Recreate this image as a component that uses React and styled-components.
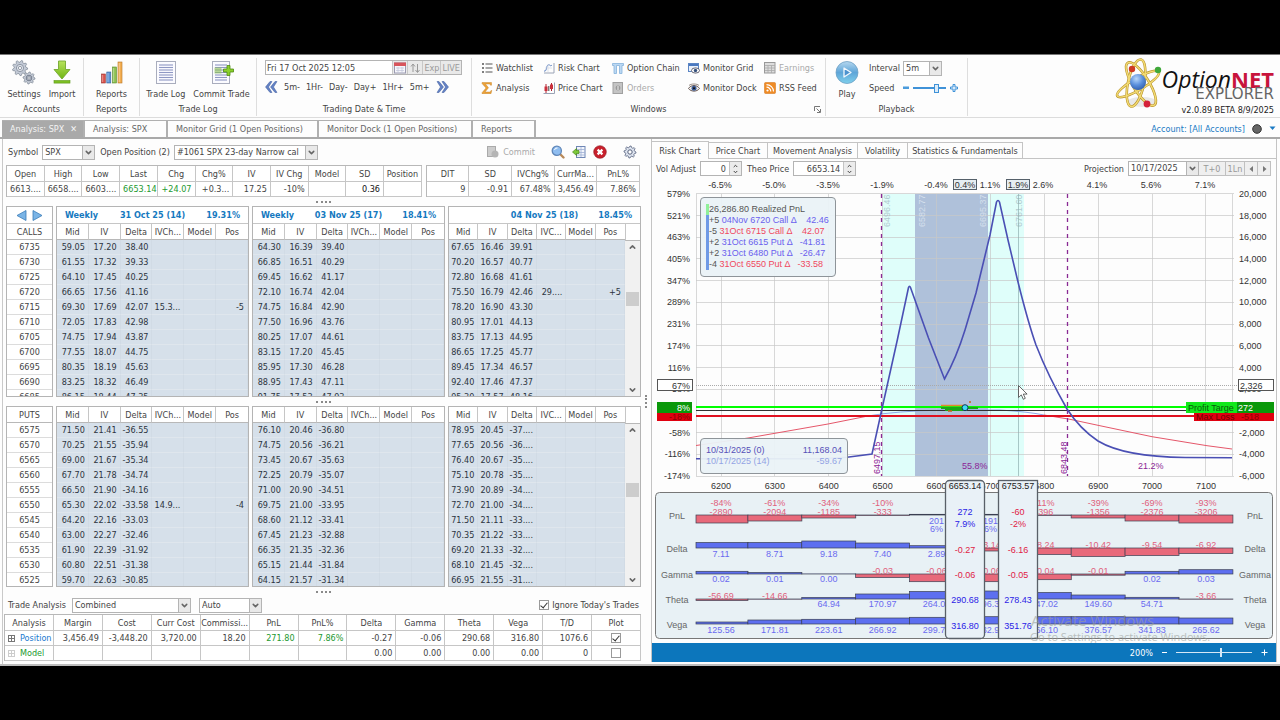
import React, { useState } from "react";
import styled, { createGlobalStyle, css } from "styled-components";
import { ChevronDown, ChevronUp } from "lucide-react";

/* ---------- data ---------- */

const quoteCols = [
  ["Open", "6613...."],
  ["High", "6658...."],
  ["Low", "6603...."],
  ["Last", "6653.14", "green"],
  ["Chg", "+24.07", "green"],
  ["Chg%", "+0.3..."],
  ["IV", "17.25"],
  ["IV Chg", "-10%"],
  ["Model", ""],
  ["SD", "0.36", "strong"],
  ["Position", ""],
];

const tradeCols = [
  ["DIT", "9"],
  ["SD", "-0.91"],
  ["IVChg%", "67.48%"],
  ["CurrMa...", "3,456.49"],
  ["PnL%", "7.86%"],
];

const callStrikes = ["6735", "6730", "6725", "6720", "6715", "6710", "6705", "6700", "6695", "6690", "6685"];
const putStrikes = ["6575", "6570", "6565", "6560", "6555", "6550", "6545", "6540", "6535", "6530", "6525"];

const calls = [
  [
    "59.05 17.20 38.40", "61.55 17.32 39.33", "64.10 17.45 40.25", "66.65 17.56 41.16",
    "69.30 17.69 42.07 15.3... - -5", "72.05 17.83 42.98", "74.75 17.94 43.87", "77.55 18.07 44.75",
    "80.35 18.19 45.63", "83.25 18.32 46.49", "86.15 18.44 47.35",
  ],
  [
    "64.30 16.39 39.40", "66.85 16.51 40.29", "69.45 16.62 41.17", "72.10 16.74 42.04",
    "74.75 16.84 42.90", "77.50 16.96 43.76", "80.25 17.07 44.61", "83.15 17.20 45.45",
    "85.95 17.30 46.28", "88.95 17.43 47.11", "91.75 17.53 47.93",
  ],
  [
    "67.65 16.46 39.91", "70.20 16.57 40.77", "72.80 16.68 41.61", "75.50 16.79 42.46 29.... - +5",
    "78.20 16.90 43.30", "80.95 17.01 44.13", "83.75 17.13 44.95", "86.65 17.25 45.77",
    "89.45 17.34 46.57", "92.40 17.46 47.37", "95.30 17.57 48.16",
  ],
];

const puts = [
  [
    "71.50 21.41 -36.55", "70.25 21.55 -35.94", "69.00 21.67 -35.34", "67.70 21.78 -34.74",
    "66.50 21.90 -34.16", "65.30 22.02 -33.58 14.9... - -4", "64.20 22.16 -33.03", "63.00 22.27 -32.46",
    "61.90 22.39 -31.92", "60.80 22.51 -31.38", "59.70 22.63 -30.85",
  ],
  [
    "76.10 20.46 -36.80", "74.75 20.56 -36.21", "73.45 20.67 -35.63", "72.25 20.79 -35.07",
    "71.00 20.90 -34.51", "69.75 21.00 -33.95", "68.60 21.12 -33.41", "67.45 21.23 -32.88",
    "66.35 21.35 -32.36", "65.15 21.44 -31.84", "64.15 21.57 -31.34",
  ],
  [
    "78.95 20.45 -37....", "77.65 20.56 -36....", "76.40 20.67 -35....", "75.10 20.78 -35....",
    "73.90 20.89 -34....", "72.70 21.00 -34....", "71.50 21.11 -33....", "70.35 21.22 -33....",
    "69.20 21.33 -32....", "68.10 21.45 -32....", "66.95 21.55 -31....",
  ],
];

const expiries = [
  { weekly: "Weekly", date: "31 Oct 25 (14)", iv: "19.31%" },
  { weekly: "Weekly", date: "03 Nov 25 (17)", iv: "18.41%" },
  { weekly: "", date: "04 Nov 25 (18)", iv: "18.45%" },
];

const analysisHead = [
  "Analysis", "Margin", "Cost", "Curr Cost", "Commissi...", "PnL", "PnL%",
  "Delta", "Gamma", "Theta", "Vega", "T/D", "Plot",
];

const legend = [
  ["+5", " 04Nov 6720 Call Δ    42.46", "#6a60ee"],
  ["-5", " 31Oct 6715 Call Δ    42.07", "#f0485e"],
  ["+2", " 31Oct 6615 Put Δ   -41.81", "#6a60ee"],
  ["+2", " 31Oct 6480 Put Δ   -26.47", "#6a60ee"],
  ["-4", " 31Oct 6550 Put Δ   -33.58", "#f0485e"],
];

/* ---------- shared parts ---------- */

const GlobalStyle = createGlobalStyle`
  * {
    box-sizing: border-box;
  }
  body {
    margin: 0;
    background: #000;
  }
  body, button, input, select {
    font-family: "DejaVu Sans Condensed", "DejaVu Sans", Tahoma, sans-serif;
    font-size: 9px;
    line-height: 12px;
    color: #444;
  }
  button {
    padding: 0;
    border: none;
    background: none;
    cursor: pointer;
  }
`;

const Page = styled.div`
  min-height: 100vh;
  padding: 54px 0;
  background: #000;
`;

const AppWindow = styled.div`
  background: #fdfdfd;
  border-top: 1px solid #777;
`;

const Row = styled.div`
  display: flex;
  align-items: center;
  gap: ${(p) => p.$gap || 0}px;
`;

const SelectWrap = styled.span`
  position: relative;
  display: flex;
  flex: 0 1 ${(p) => p.$w}px;
  width: ${(p) => p.$w}px;
  min-width: 0;
  select {
    appearance: none;
    width: 100%;
    height: 15px;
    padding: 0 12px 0 2px;
    border: 1px solid #b4b4b4;
    border-radius: 0;
    background: #fff;
    line-height: 13px;
  }
  svg {
    position: absolute;
    top: 1px;
    right: 1px;
    width: 12px;
    height: 13px;
    padding: 2px 1px;
    border-left: 1px solid #b4b4b4;
    background: #e9e9e9;
    color: #666;
    pointer-events: none;
  }
`;

function Select({ width, value, id, label }) {
  return (
    <SelectWrap $w={width}>
      <select id={id} aria-label={label} defaultValue={value}>
        <option>{value}</option>
      </select>
      <ChevronDown strokeWidth={4} />
    </SelectWrap>
  );
}

const Dots = styled.div`
  height: ${(p) => p.$h || 9}px;
  display: flex;
  align-items: center;
  justify-content: center;
  &::after {
    content: "";
    width: 15px;
    border-top: 2px dotted #8a8a8a;
  }
`;

const Check = styled.input`
  appearance: none;
  width: 10px;
  height: 10px;
  margin: 0;
  border: 1px solid #9a9a9a;
  background: #fff;
  position: relative;
  &:checked::after {
    content: "";
    position: absolute;
    left: 2px;
    top: 0;
    width: 3px;
    height: 6px;
    border: solid #333;
    border-width: 0 1px 1px 0;
    transform: rotate(40deg);
  }
`;

/* ---------- ribbon ---------- */

const RibbonBar = styled.header`
  display: flex;
  height: 63px;
  padding: 3px 6px 1px 0;
  border-bottom: 1px solid #dcdcdc;
`;

const Group = styled.section`
  flex: 0 1 ${(p) => p.$w}px;
  min-width: 0;
  display: flex;
  flex-direction: column;
  border-right: 1px solid #dedede;
`;

const GroupBody = styled.div`
  flex: 1;
  display: flex;
  justify-content: center;
  gap: ${(p) => p.$gap || 0}px;
  padding-top: 2px;
`;

const GroupLabel = styled.div`
  display: flex;
  justify-content: center;
  height: 13px;
  position: relative;
  svg {
    position: absolute;
    right: 4px;
    top: 3px;
  }
`;

const BigButton = styled.button`
  display: flex;
  flex-direction: column;
  align-items: center;
  justify-content: space-between;
  height: 40px;
  white-space: nowrap;
`;

const DateColumn = styled.div`
  flex: 1;
  padding: 0 9px 0 8px;
`;

const DateBox = styled.div`
  display: flex;
  height: 15px;
  border: 1px solid #b4b4b4;
  background: #e9e9e9;
  input {
    flex: 1;
    min-width: 0;
    border: none;
    padding: 0 1px;
  }
  button {
    border-left: 1px solid #c8c8c8;
    color: #999;
    padding: 0 1px;
    display: flex;
    align-items: center;
  }
`;

const StepRow = styled.div`
  display: flex;
  align-items: center;
  gap: 6px;
  margin-top: 6px;
  button {
    white-space: nowrap;
  }
  svg {
    display: block;
  }
`;

const WindowGrid = styled.div`
  flex: 1;
  display: grid;
  grid-template-columns: 62px 69px 76px 76px 1fr;
  grid-auto-rows: 20px;
  padding-left: 9px;
  margin-top: -2px;
  button {
    display: flex;
    align-items: center;
    gap: 3px;
    white-space: nowrap;
  }
  button:disabled {
    color: #aaa;
  }
`;

const PlayControls = styled.div`
  display: grid;
  grid-template-columns: 34px auto;
  grid-auto-rows: 20px;
  align-items: center;
  margin-top: -2px;
`;

const Slider = styled.input`
  appearance: none;
  width: ${(p) => p.$w}px;
  height: 12px;
  margin: 0;
  background: linear-gradient(${(p) => p.$color}, ${(p) => p.$color}) center / 100% ${(p) => p.$track}px no-repeat;
  &::-webkit-slider-thumb {
    appearance: none;
    width: ${(p) => p.$thumb}px;
    height: 9px;
    border: 1px solid ${(p) => p.$color};
    background: ${(p) => p.$fill};
  }
`;

const Brand = styled.div`
  margin-left: auto;
  display: flex;
  align-items: flex-start;
`;

const BrandText = styled.div`
  display: flex;
  flex-direction: column;
  align-items: flex-end;
  margin-left: -2px;
  padding-top: 8px;
`;

const BrandName = styled.div`
  font-family: "Open Sans", "Noto Sans", sans-serif;
  font-size: 23px;
  line-height: 26px;
  color: #111;
  white-space: nowrap;
  em {
    font-style: italic;
  }
  b {
    font-size: 22px;
    color: #c8143c;
  }
`;

const BrandSub = styled.div`
  font-family: "DejaVu Sans", sans-serif;
  font-size: 15px;
  line-height: 12px;
  margin-top: -4px;
  color: #666;
`;

const Version = styled.div`
  margin-top: 4px;
  color: #222;
`;

const ic = { width: 12, height: 12, viewBox: "0 0 12 12" };

const gearPath = (cx, cy, r, n) => {
  const pts = [];
  for (let i = 0; i < n * 4; i++) {
    const a = (i / (n * 4)) * Math.PI * 2;
    const rr = i % 4 < 2 ? r : r * 0.76;
    pts.push(`${(cx + rr * Math.cos(a)).toFixed(2)} ${(cy + rr * Math.sin(a)).toFixed(2)}`);
  }
  return "M" + pts.join("L") + "Z";
};

function SettingsIcon() {
  return (
    <svg width="26" height="25" viewBox="0 0 26 25">
      <g fill="#c3cad6" stroke="#7d8694" strokeWidth="0.7">
        <path d={gearPath(9, 8, 7.6, 9)} />
        <path d={gearPath(18, 18, 6, 8)} />
      </g>
      <circle cx="9" cy="8" r="3.6" fill="#dfe4ec" stroke="#7d8694" strokeWidth="0.8" />
      <circle cx="9" cy="8" r="1.6" fill="#fff" stroke="#7d8694" strokeWidth="0.8" />
      <circle cx="18" cy="18" r="2.8" fill="#b4bcc9" stroke="#666f7d" strokeWidth="0.8" />
      <circle cx="18" cy="18" r="1.2" fill="#fff" stroke="#666f7d" strokeWidth="0.6" />
    </svg>
  );
}

function ImportIcon() {
  return (
    <svg width="20" height="25" viewBox="0 0 20 25">
      <defs>
        <linearGradient id="imp" x1="0" y1="0" x2="0" y2="1">
          <stop offset="0" stopColor="#b7e35c" />
          <stop offset="1" stopColor="#6fb512" />
        </linearGradient>
      </defs>
      <path d="M6.500 1h7v8.500h4.500L10 19 2 9.500h4.500z" fill="url(#imp)" stroke="#74a832" strokeWidth="0.9" />
      <rect x="2" y="20.500" width="16" height="2.600" fill="#7cbf22" stroke="#5f9a1c" strokeWidth="0.6" />
    </svg>
  );
}

function ReportsIcon() {
  return (
    <svg width="24" height="25" viewBox="0 0 24 25">
      <rect x="1.500" y="14" width="3.800" height="9" fill="#d9504a" stroke="#96332f" strokeWidth="0.6" />
      <rect x="6.800" y="12" width="4" height="11" fill="#5c93d6" stroke="#37639c" strokeWidth="0.6" />
      <rect x="12.500" y="7" width="4" height="16" fill="#8cc152" stroke="#5a8a2c" strokeWidth="0.6" />
      <rect x="18" y="2" width="4" height="21" fill="#f3ae52" stroke="#b87626" strokeWidth="0.6" />
      <path d="M19.200 3v19M13.700 8v14M8 13v9M2.700 15v7" stroke="#fff" strokeOpacity="0.5" strokeWidth="0.8" />
    </svg>
  );
}

function TradeLogIcon({ commit }) {
  return (
    <svg width="24" height="25" viewBox="0 0 24 25">
      <rect x="2.500" y="1.500" width={commit ? 17 : 19} height="22" fill="#fbfbff" stroke="#a9adbd" />
      {[5, 7.500, 10, 12.500, 15, 17.500, 20].map((y) => (
        <path key={y} d={commit ? `M5 ${y}h12` : `M5 ${y}h14`} stroke="#8f98c4" strokeWidth="1.100" />
      ))}
      {commit && (
        <>
          <rect x="4.500" y="7.500" width="7" height="6" fill="#8cc152" opacity="0.6" />
          <path d="M17 5.500h3v3.500h3.500v3H20v3.500h-3V12h-3.500V9H17z" fill="#8ad02c" stroke="#4f8a12" strokeWidth="0.8" />
        </>
      )}
    </svg>
  );
}

function PlayIcon() {
  return (
    <svg width="24" height="25" viewBox="0 0 24 25">
      <defs>
        <linearGradient id="play" x1="0" y1="0" x2="0" y2="1">
          <stop offset="0" stopColor="#b5d7ef" />
          <stop offset="0.500" stopColor="#5ea5d8" />
          <stop offset="1" stopColor="#7fd0ec" />
        </linearGradient>
      </defs>
      <circle cx="12" cy="12.500" r="11" fill="url(#play)" stroke="#6d9fc4" strokeWidth="0.8" />
      <path d="M9 8v9l7-4.500z" fill="#4b92cf" stroke="#f2f8fd" strokeWidth="1.300" strokeLinejoin="round" />
    </svg>
  );
}

function DoubleChevron({ flip }) {
  return (
    <svg width="13" height="12" viewBox="0 0 13 12">
      <path
        d={flip ? "M1 0.500h2L7.500 6 3 11.500H1L4.500 6zM6 0.500h2L12.500 6 8 11.500H6L9.500 6z" : "M12 0.500h-2L5.500 6l4.500 5.500h2L8.500 6zM7 0.500H5L0.500 6 5 11.500h2L3.500 6z"}
        fill="#6482c4"
        stroke="#3d5a9e"
        strokeWidth="0.5"
      />
    </svg>
  );
}

function AtomLogo() {
  return (
    <svg width="50" height="52" viewBox="0 0 50 52">
      <defs>
        <radialGradient id="core" cx="0.400" cy="0.300" r="0.800">
          <stop offset="0" stopColor="#b9d8fa" />
          <stop offset="0.500" stopColor="#5a8fdc" />
          <stop offset="1" stopColor="#2a55a4" />
        </radialGradient>
      </defs>
      <ellipse cx="28" cy="44" rx="15" ry="5" fill="#e8e8e8" />
      <g fill="none" stroke="#b8932c" strokeWidth="2.600">
        <ellipse cx="27" cy="26" rx="8" ry="25" transform="rotate(-32 27 26)" />
        <ellipse cx="22" cy="25" rx="8" ry="24" transform="rotate(12 22 25)" />
        <ellipse cx="24" cy="26" rx="24" ry="6" transform="rotate(-30 24 26)" />
      </g>
      <g fill="none" stroke="#f3dc74" strokeWidth="1.400">
        <ellipse cx="27" cy="26" rx="8" ry="25" transform="rotate(-32 27 26)" />
        <ellipse cx="22" cy="25" rx="8" ry="24" transform="rotate(12 22 25)" />
        <ellipse cx="24" cy="26" rx="24" ry="6" transform="rotate(-30 24 26)" />
      </g>
      <circle cx="24" cy="24" r="8" fill="url(#core)" />
      <circle cx="18" cy="11" r="3.200" fill="#cf3a22" />
      <circle cx="44" cy="12" r="3.200" fill="#3fa83a" />
      <circle cx="33" cy="46" r="3.400" fill="#d4213a" />
    </svg>
  );
}

const windowIcons = {
  watch: (
    <svg {...ic}>
      <path d="M4.500 2h7M4.500 6h7M4.500 10h7" stroke="#555" strokeWidth="1.200" />
      <path d="M1 2h2M1 6h2M1 10h2" stroke="#555" strokeWidth="1.600" />
    </svg>
  ),
  risk: (
    <svg {...ic}>
      <path d="M11 1v10H1" stroke="#9aa3b5" fill="none" />
      <path d="M1 9c3 1 2-5 4-6s2 2 4 0" stroke="#5a7fc0" fill="none" />
      <path d="M2 6h7M5 2v8" stroke="#ccd3e0" strokeWidth="0.600" />
    </svg>
  ),
  chain: (
    <svg {...ic}>
      <path d="M0.500 1.500h11v2H10v8H7.500v-8h-3v8H2v-8H0.500z" fill="#bcd8f2" stroke="#85b2dc" strokeWidth="0.800" />
    </svg>
  ),
  mgrid: (
    <svg {...ic}>
      <rect x="0.500" y="1.500" width="10" height="8" fill="#e9f0fa" stroke="#5b85c4" />
      <path d="M1 3h9" stroke="#4a78bf" strokeWidth="2" />
      <ellipse cx="7.500" cy="8.500" rx="4" ry="2.600" fill="#fff" stroke="#445" strokeWidth="0.800" />
      <circle cx="7.500" cy="8.500" r="1.700" fill="#35507c" />
    </svg>
  ),
  earn: (
    <svg {...ic}>
      <rect x="0.500" y="0.500" width="10.500" height="10.500" fill="#ddd" stroke="#999" />
      <path d="M1 3.500h10M1 6h10M1 8.500h10M4 3.500v7.500M7.500 3.500v7.500" stroke="#aaa" strokeWidth="0.800" />
    </svg>
  ),
  sigma: (
    <svg {...ic}>
      <path d="M1 0.500h9.500v2.700h-1L9 2H4.500l3 3.800L4 10h5.200l0.800-1.500h0.800L10 11.700H1v-1l4-4.700L1 1.500z" fill="#eba23a" stroke="#c07a18" strokeWidth="0.400" />
    </svg>
  ),
  price: (
    <svg {...ic}>
      <path d="M11.500 0.500v11H0.500" stroke="#9aa3b5" fill="none" />
      <path d="M3 2v9M8.500 1v8" stroke="#b0202e" strokeWidth="1" />
      <rect x="1.500" y="4.500" width="3" height="4.500" fill="#c9303c" />
      <rect x="7" y="2.500" width="3" height="4.500" fill="#c9303c" />
      <path d="M5.800 4v5" stroke="#444" />
    </svg>
  ),
  orders: (
    <svg {...ic}>
      <rect x="1" y="0.500" width="9.500" height="11" fill="#c4c4c4" stroke="#a0a0a0" />
      <circle cx="6" cy="6" r="2.400" fill="#999" />
      <path d="M6 4v4" stroke="#eee" />
    </svg>
  ),
  mdock: (
    <svg {...ic}>
      <path d="M0.500 6.500C3 2.500 9 2.500 11.500 6.500 9 10 3 10 0.500 6.500z" fill="#eee" stroke="#5b4a44" strokeWidth="0.900" />
      <circle cx="6" cy="6.200" r="2.500" fill="#3a5a94" />
      <circle cx="6" cy="6.200" r="1" fill="#111" />
      <path d="M1 3.500C3 1.500 9 1.500 11 3.500" stroke="#6b5a50" fill="none" strokeWidth="0.700" />
    </svg>
  ),
  rss: (
    <svg {...ic}>
      <rect x="0.500" y="0.500" width="11" height="11" rx="1" fill="#ef8b25" stroke="#d06f10" strokeWidth="0.500" />
      <circle cx="3.500" cy="8.500" r="1.100" fill="#fff" />
      <path d="M2.500 5.200a4.300 4.300 0 0 1 4.300 4.300M2.500 2.600a7 7 0 0 1 7 7" fill="none" stroke="#fff" strokeWidth="1.200" />
    </svg>
  ),
};

const windowButtons = [
  ["watch", "Watchlist"],
  ["risk", "Risk Chart"],
  ["chain", "Option Chain"],
  ["mgrid", "Monitor Grid"],
  ["earn", "Earnings", true],
  ["sigma", "Analysis"],
  ["price", "Price Chart"],
  ["orders", "Orders", true],
  ["mdock", "Monitor Dock"],
  ["rss", "RSS Feed"],
];

function Ribbon() {
  return (
    <RibbonBar>
      <Group $w={84}>
        <GroupBody $gap={8}>
          <BigButton><SettingsIcon />Settings</BigButton>
          <BigButton><ImportIcon />Import</BigButton>
        </GroupBody>
        <GroupLabel>Accounts</GroupLabel>
      </Group>
      <Group $w={56}>
        <GroupBody>
          <BigButton><ReportsIcon />Reports</BigButton>
        </GroupBody>
        <GroupLabel>Reports</GroupLabel>
      </Group>
      <Group $w={117}>
        <GroupBody $gap={8}>
          <BigButton><TradeLogIcon />Trade Log</BigButton>
          <BigButton><TradeLogIcon commit />Commit Trade</BigButton>
        </GroupBody>
        <GroupLabel>Trade Log</GroupLabel>
      </Group>
      <Group $w={215}>
        <GroupBody>
          <DateColumn>
            <DateBox>
              <input aria-label="Trading date" defaultValue="Fri 17 Oct 2025 12:05" />
              <button aria-label="Calendar">
                <svg {...ic}>
                  <rect x="0.500" y="1" width="11" height="10" fill="#f6f6fb" stroke="#9a9ab0" />
                  <rect x="0" y="0.500" width="12" height="3.500" fill="#d8555c" />
                  <path d="M2 6h8M2 8.500h8M4 5v6M8 5v6" stroke="#c0c4d8" strokeWidth="0.700" />
                </svg>
              </button>
              <button aria-label="Sync">
                <svg {...ic}>
                  <path d="M4 10V2.500M2 4.500l2-2.500 2 2.500M8.500 2v8M6.500 8l2 2.500L10.500 8" stroke="#999" fill="none" />
                </svg>
              </button>
              <button>Exp</button>
              <button>LIVE</button>
            </DateBox>
            <StepRow>
              <button aria-label="Back"><DoubleChevron /></button>
              {["5m-", "1Hr-", "Day-", "Day+", "1Hr+", "5m+"].map((s) => (
                <button key={s}>{s}</button>
              ))}
              <button aria-label="Forward"><DoubleChevron flip /></button>
            </StepRow>
          </DateColumn>
        </GroupBody>
        <GroupLabel>Trading Date &amp; Time</GroupLabel>
      </Group>
      <Group $w={354}>
        <GroupBody>
          <WindowGrid>
            {windowButtons.map(([icon, label, off]) => (
              <button key={label} disabled={off}>
                {windowIcons[icon]}
                {label}
              </button>
            ))}
          </WindowGrid>
        </GroupBody>
        <GroupLabel>
          Windows
          <svg width="7" height="7" viewBox="0 0 7 7">
            <path d="M0.500 5V0.500H6M2.500 2.500l3.500 3.500M6.500 3v3.500H3" fill="none" stroke="#777" />
          </svg>
        </GroupLabel>
      </Group>
      <Group $w={142}>
        <GroupBody $gap={10}>
          <BigButton><PlayIcon />Play</BigButton>
          <PlayControls>
            <label htmlFor="interval">Interval</label>
            <Select id="interval" width={39} value="5m" />
            <label htmlFor="speed">Speed</label>
            <Row $gap={4}>
              <svg width="6" height="4" viewBox="0 0 6 4"><rect y="0.500" width="6" height="2.500" fill="#4b9bdc" /></svg>
              <Slider id="speed" type="range" defaultValue="75" $w={33} $track={2} $thumb={5} $color="#3f92d8" $fill="#dcecf9" />
              <svg width="8" height="8" viewBox="0 0 8 8">
                <path d="M3 0.500h2V3h2.500v2H5v2.500H3V5H0.500V3H3z" fill="#d8eafa" stroke="#3f92d8" />
              </svg>
            </Row>
          </PlayControls>
        </GroupBody>
        <GroupLabel>Playback</GroupLabel>
      </Group>
      <Brand>
        <AtomLogo />
        <BrandText>
          <BrandName><em>Option</em><b>NET</b></BrandName>
          <BrandSub>EXPLORER</BrandSub>
          <Version>v2.0.89 BETA 8/9/2025</Version>
        </BrandText>
      </Brand>
    </RibbonBar>
  );
}

/* ---------- document tabs ---------- */

const TabStrip = styled.nav`
  display: flex;
  align-items: flex-end;
  height: 21px;
  padding-left: 2px;
  border-bottom: 2px solid #a9a9a9;
`;

const DocTab = styled.button`
  flex: 0 1 ${(p) => p.$w}px;
  height: 17px;
  padding: 0 6px 0 8px;
  display: flex;
  align-items: center;
  justify-content: space-between;
  border-top: 1px solid #b0b0b0;
  border-right: 2px solid #b0b0b0;
  color: #666;
  white-space: nowrap;
  ${(p) =>
    p.$active &&
    css`
      background: #a9a9a9;
      color: #f4f4f4;
    `}
`;

const Account = styled.div`
  margin-left: auto;
  display: flex;
  align-items: center;
  gap: 7px;
  height: 17px;
  padding-right: 4px;
  a {
    color: #1b7ac4;
    text-decoration: none;
  }
`;

function DocTabs() {
  return (
    <TabStrip>
      <DocTab $w={83} $active>Analysis: SPX <span>✕</span></DocTab>
      <DocTab $w={83}>Analysis: SPX</DocTab>
      <DocTab $w={151}>Monitor Grid (1 Open Positions)</DocTab>
      <DocTab $w={154}>Monitor Dock (1 Open Positions)</DocTab>
      <DocTab $w={63}>Reports</DocTab>
      <Account>
        <a href="#accounts">Account: [All Accounts]</a>
        <svg width="10" height="10" viewBox="0 0 10 10"><circle cx="5" cy="5" r="4.300" fill="#666" stroke="#333" /></svg>
        <svg width="7" height="5" viewBox="0 0 7 5"><path d="M0.500 0.500h6L3.500 4z" fill="#1b7ac4" /></svg>
      </Account>
    </TabStrip>
  );
}

/* ---------- left side ---------- */

const Workspace = styled.main`
  display: grid;
  grid-template-columns: 650fr 630fr;
  border-bottom: 2px solid #bdbdbd;
`;

const Left = styled.div`
  display: flex;
  min-width: 0;
  margin-left: 2px;
  border-left: 1px solid #c9c9c9;
`;

const LeftContent = styled.div`
  flex: 1;
  min-width: 0;
  padding-left: 3px;
`;

const Splitter = styled.div`
  width: 9px;
  display: flex;
  align-items: center;
  justify-content: center;
  &::after {
    content: "";
    height: 13px;
    border-left: 2px dotted #8a8a8a;
  }
`;

const SymbolRow = styled.div`
  display: flex;
  align-items: center;
  height: 26px;
  padding: 0 4px 0 2px;
  label {
    margin-right: 4px;
  }
  label + span {
    margin-right: 5px;
  }
`;

const Tools = styled.div`
  margin-left: auto;
  display: flex;
  align-items: center;
  gap: 7px;
  button {
    display: flex;
    align-items: center;
    gap: 4px;
  }
  button:disabled {
    color: #aaa;
    margin-right: 9px;
  }
  button:last-child {
    margin-left: 9px;
  }
`;

const Grid = styled.table`
  width: ${(p) => (p.$w ? p.$w + "%" : "100%")};
  table-layout: fixed;
  border-collapse: separate;
  border-spacing: 0;
  border-left: 1px solid #b8b8b8;
  border-top: 1px solid #b8b8b8;
  background: #fff;
  th, td {
    height: 15px;
    padding: 0 3px;
    border-right: 1px solid #c6c6c6;
    border-bottom: 1px solid #c6c6c6;
    font-weight: normal;
    line-height: 12px;
    white-space: nowrap;
  }
  th {
    padding: 0;
    height: 16px;
    text-align: center;
  }
  td {
    text-align: right;
  }
`;

const tones = { green: "#23992f", strong: "#111", blue: "#1b7ad0" };

const Cell = styled.td`
  color: ${(p) => tones[p.$tone] || "#444"};
`;

const QuoteRow = styled.div`
  display: flex;
  gap: 4px;
  padding-right: 1px;
`;

function QuoteTable({ cols, width }) {
  return (
    <Grid $w={width}>
      <thead>
        <tr>{cols.map(([h]) => <th key={h}>{h}</th>)}</tr>
      </thead>
      <tbody>
        <tr>{cols.map(([h, v, tone]) => <Cell key={h} $tone={tone}>{v}</Cell>)}</tr>
      </tbody>
    </Grid>
  );
}

const Chains = styled.section`
  display: grid;
  grid-template-columns: 47fr 193fr 193fr 193fr;
  gap: 3px;
  height: ${(p) => p.$h}px;
`;

const Panel = styled.div`
  min-width: 0;
  overflow: hidden;
  border: 1px solid #b4b4b4;
  background: #fff;
`;

const ExpiryTitle = styled.div`
  display: grid;
  grid-template-columns: 1fr 2fr 1fr;
  align-items: center;
  height: 17px;
  padding: 0 8px;
  border-bottom: 1px solid #c6c6c6;
  font-weight: bold;
  color: #1579bf;
  white-space: nowrap;
  span:nth-child(2) {
    text-align: center;
  }
  span:nth-child(3) {
    text-align: right;
  }
`;

const NavArrows = styled.div`
  display: flex;
  align-items: center;
  justify-content: center;
  gap: 5px;
  height: 17px;
  border-bottom: 1px solid #c6c6c6;
  svg {
    display: block;
  }
`;

const ChainBody = styled.div`
  display: flex;
`;

const ChainTable = styled.table`
  flex: 1;
  width: 100%;
  min-width: 0;
  table-layout: fixed;
  border-collapse: separate;
  border-spacing: 0;
  th, td {
    padding: 0;
    font-weight: normal;
    line-height: 12px;
    white-space: nowrap;
  }
  th {
    height: 16px;
    border-right: 1px solid #c6c6c6;
    border-bottom: 1px solid #b8b8b8;
  }
  th:last-child {
    border-right: none;
  }
  td {
    height: 15px;
    padding-right: 3px;
    text-align: right;
    color: #2c3440;
    background: #d6e0ea;
    border-right: 1px solid #d1dbe5;
    border-bottom: 1px solid #dfe6ed;
  }
  ${(p) =>
    p.$strikes &&
    css`
      td {
        padding: 0;
        text-align: center;
        color: #444;
        background: #fff;
        border-right: none;
        border-bottom: 1px solid #dcdcdc;
      }
    `}
`;

const Scroll = styled.div`
  flex: 0 0 14px;
  display: flex;
  flex-direction: column;
  align-items: center;
  height: ${(p) => p.$h}px;
  background: #f1f1f1;
  color: #666;
  &::before {
    content: "";
    width: 14px;
    height: 16px;
    border-left: 1px solid #c6c6c6;
    border-bottom: 1px solid #b8b8b8;
    background: #fff;
  }
  svg {
    width: 9px;
    height: 12px;
  }
`;

const ScrollThumb = styled.div`
  width: 13px;
  height: 14px;
  margin: ${(p) => p.$top}px 0 auto;
  background: #cdcdcd;
`;

function Chain({ rows, expiry, scroll, height }) {
  return (
    <Panel>
      {expiry && (
        <ExpiryTitle>
          <span>{expiry.weekly}</span>
          <span>{expiry.date}</span>
          <span>{expiry.iv}</span>
        </ExpiryTitle>
      )}
      <ChainBody>
        <ChainTable>
          <thead>
            <tr>
              {["Mid", "IV", "Delta", scroll ? "IVC..." : "IVCh...", "Model", "Pos"].map((h) => (
                <th key={h}>{h}</th>
              ))}
            </tr>
          </thead>
          <tbody>
            {rows.map((r) => {
              const c = r.split(" ");
              return (
                <tr key={r}>
                  {[0, 1, 2, 3, 4, 5].map((i) => (
                    <td key={i}>{i === 4 ? "" : c[i]}</td>
                  ))}
                </tr>
              );
            })}
          </tbody>
        </ChainTable>
        {scroll ? (
          <Scroll $h={height}>
            <ChevronUp strokeWidth={4} />
            <ScrollThumb $top={scroll} />
            <ChevronDown strokeWidth={4} />
          </Scroll>
        ) : null}
      </ChainBody>
    </Panel>
  );
}

function Strikes({ title, rows, arrows }) {
  return (
    <Panel>
      {arrows && (
        <NavArrows>
          <button aria-label="Previous expiries">
            <svg width="11" height="11" viewBox="0 0 11 11"><path d="M10 0.500v10L1 5.500z" fill="#7ab4e6" stroke="#3a7cb8" strokeWidth="0.800" /></svg>
          </button>
          <button aria-label="Next expiries">
            <svg width="11" height="11" viewBox="0 0 11 11"><path d="M1 0.500v10l9-5z" fill="#7ab4e6" stroke="#3a7cb8" strokeWidth="0.800" /></svg>
          </button>
        </NavArrows>
      )}
      <ChainTable $strikes>
        <thead>
          <tr><th>{title}</th></tr>
        </thead>
        <tbody>
          {rows.map((s) => <tr key={s}><td>{s}</td></tr>)}
        </tbody>
      </ChainTable>
    </Panel>
  );
}

const TradeRow = styled.div`
  display: flex;
  align-items: center;
  height: 18px;
  padding: 0 2px;
  label:first-child {
    margin-right: 6px;
  }
  span + span {
    margin-left: 8px;
  }
`;

const IgnoreLabel = styled.label`
  margin-left: auto;
  display: flex;
  align-items: center;
  gap: 3px;
`;

const AnalysisTable = styled(Grid)`
  width: calc(100% + 2px);
  margin: 0 0 3px -2px;
  td:first-child {
    text-align: left;
  }
  td:last-child {
    text-align: center;
  }
  td input {
    display: block;
    margin: auto;
  }
`;

const Expander = styled.button`
  width: 7px;
  height: 7px;
  margin-right: 5px;
  border: 1px solid ${(p) => (p.$off ? "#ccc" : "#777")};
  background: linear-gradient(currentColor, currentColor) center / 5px 1px no-repeat,
    linear-gradient(currentColor, currentColor) center / 1px 5px no-repeat;
  color: ${(p) => (p.$off ? "#ccc" : "#777")};
`;

function AnalysisPane() {
  const [ignore, setIgnore] = useState(true);
  return (
    <Left>
      <LeftContent>
        <SymbolRow>
          <label htmlFor="symbol">Symbol</label>
          <Select id="symbol" width={53} value="SPX" />
          <label htmlFor="position">Open Position (2)</label>
          <Select id="position" width={144} value="#1061 SPX 23-day Narrow cal" />
          <Tools>
            <button disabled>
              <svg width="12" height="12" viewBox="0 0 12 12">
                <rect x="0.500" y="0.500" width="8" height="10" fill="#ccc" stroke="#aaa" />
                <circle cx="8" cy="8" r="3.500" fill="#b5b5b5" />
              </svg>
              Commit
            </button>
            <button aria-label="Search">
              <svg width="14" height="14" viewBox="0 0 14 14">
                <path d="M8.500 8.500l4 4" stroke="#b98a5a" strokeWidth="2.400" strokeLinecap="round" />
                <circle cx="5.800" cy="5.800" r="4.600" fill="#8fbdf0" stroke="#5f86b8" strokeWidth="1.300" />
                <path d="M3.500 5a2.600 2.600 0 0 1 3-2" stroke="#fff" fill="none" />
              </svg>
            </button>
            <button aria-label="Add to log">
              <svg width="14" height="14" viewBox="0 0 14 14">
                <rect x="4.500" y="1.500" width="8.500" height="11" fill="#f2f5fc" stroke="#6f86b5" />
                <path d="M5 4.500h8M5 7.500h8M5 10h8M9 2v10" stroke="#9fb0d4" strokeWidth="0.800" />
                <path d="M0.500 7l4-3.500v2h2.500v3H4.500v2z" fill="#7cc83a" stroke="#4a8a1c" strokeWidth="0.700" />
              </svg>
            </button>
            <button aria-label="Close position">
              <svg width="14" height="14" viewBox="0 0 14 14">
                <circle cx="7" cy="7" r="6.300" fill="#c8202c" stroke="#8f1820" strokeWidth="0.600" />
                <path d="M4.600 4.600l4.800 4.800M9.400 4.600L4.600 9.400" stroke="#fff" strokeWidth="2.200" />
              </svg>
            </button>
            <button aria-label="Options">
              <svg width="14" height="14" viewBox="0 0 14 14">
                <path d={gearPath(7, 7, 6, 8)} fill="#dfe5f0" stroke="#56617c" strokeWidth="0.800" />
                <circle cx="7" cy="7" r="2.200" fill="#fff" stroke="#56617c" />
              </svg>
            </button>
          </Tools>
        </SymbolRow>

        <QuoteRow>
          <QuoteTable cols={quoteCols} width={66} />
          <QuoteTable cols={tradeCols} width={34} />
        </QuoteRow>
        <Dots />

        <Chains $h={191}>
          <Strikes title="CALLS" rows={callStrikes} arrows />
          {calls.map((rows, i) => (
            <Chain key={i} rows={rows} expiry={expiries[i]} scroll={i === 2 ? 39 : 0} height={172} />
          ))}
        </Chains>
        <Dots />
        <Chains $h={181}>
          <Strikes title="PUTS" rows={putStrikes} />
          {puts.map((rows, i) => (
            <Chain key={i} rows={rows} scroll={i === 2 ? 47 : 0} height={179} />
          ))}
        </Chains>
        <Dots />

        <TradeRow>
          <label htmlFor="analysis">Trade Analysis</label>
          <Select id="analysis" width={119} value="Combined" />
          <Select label="Mode" width={63} value="Auto" />
          <IgnoreLabel>
            <Check type="checkbox" checked={ignore} onChange={(e) => setIgnore(e.target.checked)} />
            Ignore Today's Trades
          </IgnoreLabel>
        </TradeRow>
        <AnalysisTable>
          <thead>
            <tr>{analysisHead.map((h) => <th key={h}>{h}</th>)}</tr>
          </thead>
          <tbody>
            <tr>
              <Cell $tone="blue"><Expander aria-label="Expand position" />Position</Cell>
              {["3,456.49", "-3,448.20", "3,720.00", "18.20"].map((v) => <Cell key={v}>{v}</Cell>)}
              <Cell $tone="green">271.80</Cell>
              <Cell $tone="green">7.86%</Cell>
              {["-0.27", "-0.06", "290.68", "316.80", "1076.6"].map((v) => <Cell key={v}>{v}</Cell>)}
              <Cell><Check type="checkbox" aria-label="Plot position" defaultChecked /></Cell>
            </tr>
            <tr>
              <Cell $tone="green"><Expander $off aria-label="Expand model" />Model</Cell>
              {["", "", "", "", "", "", "0.00", "0.00", "0.00", "0.00", "0"].map((v, i) => <Cell key={i}>{v}</Cell>)}
              <Cell><Check type="checkbox" aria-label="Plot model" /></Cell>
            </tr>
          </tbody>
        </AnalysisTable>
      </LeftContent>
      <Splitter />
    </Left>
  );
}

/* ---------- right side ---------- */

const Right = styled.div`
  min-width: 0;
  margin: 0 3px 2px 1px;
  border: solid #c4c4c4;
  border-width: 0 1px;
  display: flex;
  flex-direction: column;
`;

const ChartTabs = styled.nav`
  display: flex;
  align-items: flex-end;
  height: 20px;
  border-bottom: 1px solid #c4c4c4;
`;

const ChartTab = styled.button`
  flex: 0 1 ${(p) => p.$w}px;
  height: ${(p) => (p.$active ? 18 : 16)}px;
  margin-bottom: ${(p) => (p.$active ? -1 : 0)}px;
  border: 1px solid #c4c4c4;
  border-left: none;
  border-bottom: none;
  background: #fdfdfd;
  white-space: nowrap;
`;

const ChartToolbar = styled.div`
  display: flex;
  align-items: center;
  height: 19px;
  padding: 0 5px 0 4px;
  label {
    margin-right: 4px;
  }
`;

const SpinBox = styled.span`
  display: flex;
  flex: 0 0 ${(p) => p.$w}px;
  width: ${(p) => p.$w}px;
  min-width: 0;
  height: 15px;
  margin-right: 5px;
  border: 1px solid #b4b4b4;
  input {
    flex: 1;
    width: 0;
    min-width: 0;
    border: none;
    padding: 0 3px 0 0;
    text-align: right;
  }
`;

const SpinArrows = styled.span`
  display: flex;
  flex-direction: column;
  justify-content: center;
  width: 12px;
  background: #ececec;
  border-left: 1px solid #c4c4c4;
  button {
    display: flex;
    justify-content: center;
  }
  svg {
    width: 7px;
    height: 6px;
  }
`;

const Projection = styled.div`
  flex: 1;
  display: flex;
  justify-content: flex-end;
  align-items: center;
`;

const ToolButton = styled.button`
  width: ${(p) => p.$w}px;
  height: 15px;
  border: 1px solid #c0c0c0;
  border-left: none;
  background: #efefef;
  color: #999;
  display: flex;
  align-items: center;
  justify-content: center;
`;

function Spin({ id, value, width }) {
  return (
    <SpinBox $w={width}>
      <input id={id} defaultValue={value} />
      <SpinArrows>
        <button aria-label="Increase"><ChevronUp strokeWidth={4} /></button>
        <button aria-label="Decrease"><ChevronDown strokeWidth={4} /></button>
      </SpinArrows>
    </SpinBox>
  );
}

const ChartWrap = styled.div`
  position: relative;
  font-family: "Liberation Sans", Arial, sans-serif;
`;

const ChartSvg = styled.svg`
  display: block;
  width: 100%;
  height: auto;
  font-family: "Liberation Sans", Arial, sans-serif;
  font-size: 9px;
`;

const LegendBox = styled.div`
  position: absolute;
  left: 48px;
  top: ${(p) => p.$top}px;
  width: ${(p) => p.$w}px;
  padding: ${(p) => p.$pad};
  border: 1px solid #8e9499;
  border-radius: 4px;
  background: rgba(234, 242, 247, 0.95);
  line-height: 11px;
  white-space: pre;
`;

const LegendLine = styled.div`
  height: 11px;
  border-left: 3px solid ${(p) => p.$mark};
  color: #555;
`;

const Tint = styled.span`
  color: ${(p) => p.$c};
`;

const PayoffLine = styled.div`
  display: flex;
  justify-content: space-between;
  color: ${(p) => p.$c};
`;

const xOf = (price) => 721 + (price - 6200) * 0.5388;
const yOf = (pnl) => 411 - pnl * 0.01086;

const prices = [6200, 6300, 6400, 6500, 6600, 6700, 6800, 6900, 7000, 7100];
const yTicks = [
  [20000, "579%", "20,000"], [18000, "521%", "18,000"], [16000, "463%", "16,000"],
  [14000, "405%", "14,000"], [12000, "347%", "12,000"], [10000, "289%", "10,000"],
  [8000, "231%", "8,000"], [6000, "174%", "6,000"], [4000, "116%", "4,000"],
  [2000, "58%", "2,000"], [-2000, "-58%", "-2,000"], [-4000, "-116%", "-4,000"],
  [-6000, "-174%", "-6,000"],
];
const moves = [
  [720, "-6.5%"], [774, "-5.0%"], [828, "-3.5%"], [882, "-1.9%"], [936, "-0.4%"],
  [965, "0.4%", true], [990, "1.1%"], [1018, "1.9%", true], [1043, "2.6%"],
  [1097, "4.1%"], [1151, "5.6%"], [1205, "7.1%"],
];

// h is the signed bar height, positive bars grow upwards in blue
const greeks = [
  {
    name: "PnL", base: 515, up: 512, down: 521,
    h: [-8, -6, -3, -0.5, 0.7, 0.7, -0.5, -3, -6, -8],
    v: ["-2890", "-2094", "-1185", "-333", "201", "191", "-396", "-1356", "-2376", "-3206"],
  },
  {
    name: "Delta", base: 548, up: 545, down: 554,
    h: [5.5, 5.5, 7, 5, 2.3, -3, -6.5, -8.5, -7.5, -5.5],
    v: ["7.11", "8.71", "9.18", "7.40", "2.89", "-3.14", "-8.24", "-10.42", "-9.54", "-6.92"],
  },
  {
    name: "Gamma", base: 574, up: 571, down: 579,
    h: [2.7, 1.5, 0.1, -3.5, -7.7, -7.7, -5.7, -1.2, 2.7, 4.3],
    v: ["0.02", "0.01", "0.00", "-0.03", "-0.06", "-0.06", "-0.04", "-0.01", "0.02", "0.03"],
  },
  {
    name: "Theta", base: 599, up: 596, down: 604,
    h: [-1.5, -0.2, 1.5, 5, 7.5, 8, 6.5, 4, 1.7, -0.2],
    v: ["-56.69", "-14.66", "64.94", "170.97", "264.09", "296.36", "247.02", "149.60", "54.71", "-3.66"],
  },
  {
    name: "Vega", base: 624, up: 621, down: 630,
    h: [2, 4, 4.7, 6, 6.7, 7.3, 7.3, 7.3, 7, 6],
    v: ["125.56", "171.81", "223.61", "266.92", "299.75", "332.91", "366.10", "376.57", "341.83", "265.62"],
  },
];
const pnlPct = ["-84%", "-61%", "-34%", "-10%", "6%", "6%", "-11%", "-39%", "-69%", "-93%"];

const cursors = [
  { x: 965, r: 4, values: ["6653.14", "272", "7.9%", "-0.27", "-0.06", "290.68", "316.80"] },
  { x: 1018, r: 0, values: ["6753.57", "-60", "-2%", "-6.16", "-0.05", "278.43", "351.76"] },
];
const cursorY = [489, 515, 527, 553, 578, 603, 629];

function PayoffChart() {
  return (
    <g>
      <rect x="882" y="194" width="142" height="282" fill="#dffefa" />
      <rect x="915" y="194" width="73" height="282" fill="#afc1da" />

      <g stroke="#c8c8c8" strokeOpacity="0.700" shapeRendering="crispEdges">
        {yTicks.map(([v]) => <line key={v} x1="696" x2="1234" y1={yOf(v)} y2={yOf(v)} />)}
        {prices.map((p) => <line key={p} x1={xOf(p)} x2={xOf(p)} y1="194" y2="476" />)}
        <line x1="696.500" x2="696.500" y1="194" y2="476" />
        <line x1="1232.500" x2="1232.500" y1="194" y2="476" />
      </g>

      <g fill="#333">
        {yTicks.map(([v, l, r]) => (
          <g key={v}>
            <text x="690" y={yOf(v) + 3} textAnchor="end">{l}</text>
            <text x="1239" y={yOf(v) + 3}>{r}</text>
          </g>
        ))}
        {moves.map(([x, t, box]) => (
          <g key={t}>
            {box && <rect x={x - 11.5} y="179.500" width="23" height="10" fill="#e6eef2" stroke="#55606a" />}
            <text x={x} y="188" textAnchor="middle">{t}</text>
          </g>
        ))}
        {prices.map((p) => <text key={p} x={xOf(p)} y="489" textAnchor="middle">{p}</text>)}
      </g>

      <g fill="#9fb4c0" opacity="0.700">
        <text transform="translate(890 227) rotate(-90)">6496.46</text>
        <text transform="translate(925 227) rotate(-90)" fill="#e3ecf5">6582.77</text>
        <text transform="translate(986 227) rotate(-90)" fill="#e3ecf5">6695.37</text>
        <text transform="translate(1022 227) rotate(-90)">6761.60</text>
      </g>

      <line x1="696" x2="1238" y1="385.500" y2="385.500" stroke="#aaa" strokeDasharray="1 1" />
      <line x1="1018.500" x2="1018.500" y1="194" y2="476" stroke="#8fafaf" strokeOpacity="0.700" />

      <path d="M696 445.500L748 438 828 424 868 416" fill="none" stroke="#e5576a" />
      <path d="M868 416Q895 411 945 410L1000 410Q1030 412 1044 415" fill="none" stroke="#8fa8ea" />
      <path d="M1044 415L1070 419.300 1098 425.300 1152 436.700 1207 445.700 1232 449" fill="none" stroke="#e5576a" />

      <line x1="696" x2="1186" y1="407" y2="407" stroke="#0f0" strokeWidth="2" />
      <line x1="696" x2="1238" y1="410.500" y2="410.500" stroke="#333" />
      <line x1="696" x2="1194" y1="416" y2="416" stroke="#e01020" strokeWidth="2" />

      <g stroke="#8a2a94" strokeWidth="1.300" strokeDasharray="4 4">
        <line x1="881.500" x2="881.500" y1="194" y2="476" />
        <line x1="1067.500" x2="1067.500" y1="194" y2="476" />
      </g>
      <g fill="#8c1f96">
        <text transform="translate(880 474) rotate(-90)">6497.15</text>
        <text transform="translate(1067 474) rotate(-90)">6843.48</text>
        <text x="962" y="469">55.8%</text>
        <text x="1138" y="469">21.2%</text>
      </g>

      <path
        d="M696 458.700H820L847 457.300 872 454 881.500 411 897.300 340 908.500 287.500Q909.500 285 910.500 287.500L928.500 338 944.500 379C954 362 960 346 965 330L976 293 990 235 996.500 202Q998 199 999.500 202L1008 240 1018 282C1024 306 1030 328 1036 345C1043 363 1055 388 1067 409Q1080 429 1098 441C1113 450 1138 457 1185 457.500L1232 457.700"
        fill="none"
        stroke="#4a4fb4"
        strokeWidth="1.600"
      />

      <path d="M941 405.500h24" stroke="#e08a2a" strokeWidth="1.500" />
      <path d="M941 408h37M945 410h22" stroke="#18a818" strokeWidth="2" />
      <path d="M948 411h4M969 402h2" stroke="#c86418" strokeWidth="1.500" />
      <circle cx="965" cy="407.700" r="3" fill="#3fdcf4" stroke="#123a5c" />

      <rect x="657.500" y="379.500" width="35" height="11" fill="#fff" stroke="#555" />
      <text x="690" y="389" textAnchor="end" fill="#333">67%</text>
      <rect x="657" y="413" width="35" height="8" fill="#e00010" />
      <text x="690" y="420" textAnchor="end" fill="#8c0000">-18%</text>
      <rect x="657" y="402" width="35" height="11" fill="#0a980a" />
      <text x="690" y="411" textAnchor="end" fill="#fff">8%</text>

      <rect x="1238.500" y="379.500" width="35" height="11" fill="#fff" stroke="#555" />
      <text x="1240" y="389" fill="#333">2,326</text>
      <rect x="1194" y="413" width="80" height="8" fill="#e00010" />
      <text x="1196" y="420" fill="#700000">Max Loss</text>
      <text x="1241" y="420" fill="#8c0000">-518</text>
      <rect x="1186" y="402" width="52" height="11" fill="#12e81c" />
      <text x="1188" y="411" fill="#0a5a0a">Profit Targe</text>
      <rect x="1237" y="402" width="37" height="11" fill="#0a980a" />
      <text x="1238" y="411" fill="#fff">272</text>
    </g>
  );
}

function GreeksPanel() {
  return (
    <g>
      <rect x="655.500" y="492.500" width="617" height="146" rx="4" fill="#e8f1f5" stroke="#777" />
      {greeks.map((g) => (
        <g key={g.name}>
          <text x="677" y={g.base + 4} textAnchor="middle" fill="#666">{g.name}</text>
          <text x="1255" y={g.base + 4} textAnchor="middle" fill="#666">{g.name}</text>
          {g.h.map((h, i) => {
            const left = i === 0 ? 696 : xOf(prices[i]) - 27;
            return (
              <rect
                key={i}
                x={left}
                y={h > 0 ? g.base - h : g.base}
                width={xOf(prices[i]) + 27 - left}
                height={Math.abs(h)}
                fill={h > 0 ? "#5d6ff0" : "#e8697a"}
                stroke="#3a3f52"
                strokeWidth="0.700"
              />
            );
          })}
          {g.v.map((v, i) => {
            const neg = v[0] === "-";
            return (
              <text
                key={i}
                x={xOf(prices[i])}
                y={(neg ? g.up : g.down) + 3}
                textAnchor="middle"
                fill={neg ? "#e0607c" : "#6a6af0"}
              >
                {v}
              </text>
            );
          })}
        </g>
      ))}
      {pnlPct.map((t, i) => (
        <text key={i} x={xOf(prices[i])} y={t[0] === "-" ? 506 : 532} textAnchor="middle" fill={t[0] === "-" ? "#e0607c" : "#6a6af0"}>
          {t}
        </text>
      ))}
      {cursors.map((c) => (
        <g key={c.x}>
          <rect x={c.x - 19.5} y="480.500" width="39" height="158" rx={c.r} fill="#e9f1f7" stroke="#596068" strokeWidth="1.300" />
          {c.values.map((v, i) => (
            <text key={i} x={c.x} y={cursorY[i]} textAnchor="middle" fill={i === 0 ? "#222" : v[0] === "-" ? "#e01a44" : "#2a22e6"}>
              {v}
            </text>
          ))}
        </g>
      ))}
    </g>
  );
}

function RiskChart() {
  return (
    <ChartWrap>
      <ChartSvg viewBox="652 178 624 465" role="img" aria-label="Risk chart">
        <PayoffChart />
        <GreeksPanel />
        <g fill="#9a9f9a" opacity="0.600" fontFamily="Open Sans, sans-serif">
          <text x="1031" y="626" fontSize="15">Activate Windows</text>
          <text x="1030" y="641" fontSize="11">Go to Settings to activate Windows.</text>
        </g>
        <path d="M1018.500 385.500v12l2.800-2.600 2 4.400 2-1-2-4.200h3.800z" fill="#fff" stroke="#444" strokeWidth="0.800" />
      </ChartSvg>
      <LegendBox $top={19} $w={136} $pad="6px 5px">
        <LegendLine $mark="#8ff09a">26,286.80 Realized PnL</LegendLine>
        {legend.map(([qty, text, color]) => (
          <LegendLine key={text} $mark="#6f9ae6">
            {qty}
            <Tint $c={color}>{text}</Tint>
          </LegendLine>
        ))}
      </LegendBox>
      <LegendBox $top={260} $w={148} $pad="6px 5px">
        <PayoffLine $c="#5650b8"><span>10/31/2025 (0)</span><span>11,168.04</span></PayoffLine>
        <PayoffLine $c="#93a4e4"><span>10/17/2025 (14)</span><span>-59.67</span></PayoffLine>
      </LegendBox>
    </ChartWrap>
  );
}

const StatusBar = styled.footer`
  display: flex;
  align-items: center;
  justify-content: flex-end;
  gap: 9px;
  height: 19px;
  padding-right: 8px;
  background: #0c76bc;
  color: #fff;
`;

function ChartPane() {
  return (
    <Right>
      <ChartTabs>
        <ChartTab $w={57} $active>Risk Chart</ChartTab>
        <ChartTab $w={59}>Price Chart</ChartTab>
        <ChartTab $w={90}>Movement Analysis</ChartTab>
        <ChartTab $w={50}>Volatility</ChartTab>
        <ChartTab $w={115}>Statistics &amp; Fundamentals</ChartTab>
      </ChartTabs>
      <ChartToolbar>
        <label htmlFor="vol">Vol Adjust</label>
        <Spin id="vol" value="0" width={42} />
        <label htmlFor="theo">Theo Price</label>
        <Spin id="theo" value="6653.14" width={63} />
        <Projection>
          <label htmlFor="projection">Projection</label>
          <Select id="projection" width={71} value="10/17/2025" />
          <ToolButton $w={27}>T+0</ToolButton>
          <ToolButton $w={19}>1Ln</ToolButton>
          <ToolButton $w={13} aria-label="Earlier">
            <svg width="5" height="6" viewBox="0 0 5 6"><path d="M4 0v6L0.500 3z" fill="#777" /></svg>
          </ToolButton>
          <ToolButton $w={13} aria-label="Later">
            <svg width="5" height="6" viewBox="0 0 5 6"><path d="M1 0v6l3.500-3z" fill="#777" /></svg>
          </ToolButton>
        </Projection>
      </ChartToolbar>
      <RiskChart />
      <StatusBar>
        <label htmlFor="zoom">200%</label>
        <svg width="5" height="5" viewBox="0 0 5 5"><path d="M0 2.500h5" stroke="#fff" /></svg>
        <Slider id="zoom" type="range" defaultValue="60" $w={76} $track={1} $thumb={2} $color="#d6e8f6" $fill="#fff" />
        <svg width="7" height="7" viewBox="0 0 7 7"><path d="M0.500 3.500h6M3.500 0.500v6" stroke="#fff" /></svg>
      </StatusBar>
    </Right>
  );
}

export default function App() {
  return (
    <>
      <GlobalStyle />
      <Page>
        <AppWindow>
          <Ribbon />
          <DocTabs />
          <Workspace>
            <AnalysisPane />
            <ChartPane />
          </Workspace>
        </AppWindow>
      </Page>
    </>
  );
}
